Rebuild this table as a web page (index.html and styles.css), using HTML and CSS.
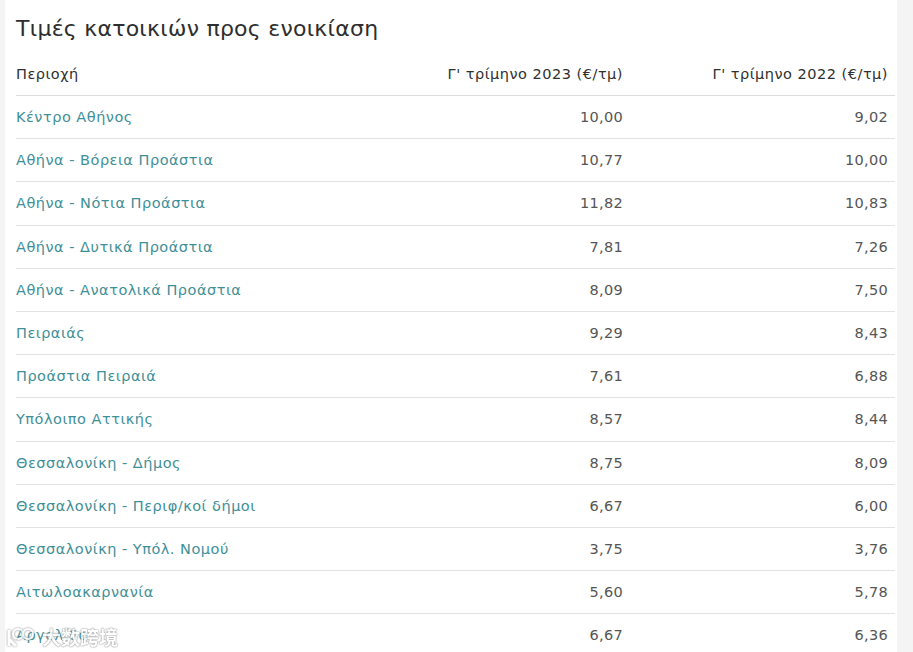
FILE: index.html
```html
<!DOCTYPE html>
<html lang="el">
<head>
<meta charset="utf-8">
<link rel="stylesheet" href="styles.css">
</head>
<body>
<div class="page">
  <div class="card">
    <h1 class="title">Τιμές κατοικιών προς ενοικίαση</h1>
    <table class="rent">
      <thead>
        <tr><th class="c-area">Περιοχή</th><th class="c-num">Γ' τρίμηνο 2023 (€/τμ)</th><th class="c-num">Γ' τρίμηνο 2022 (€/τμ)</th></tr>
      </thead>
      <tbody>
        <tr><td class="c-area">Κέντρο Αθήνος</td><td class="c-num">10,00</td><td class="c-num">9,02</td></tr>
        <tr><td class="c-area">Αθήνα - Βόρεια Προάστια</td><td class="c-num">10,77</td><td class="c-num">10,00</td></tr>
        <tr><td class="c-area">Αθήνα - Νότια Προάστια</td><td class="c-num">11,82</td><td class="c-num">10,83</td></tr>
        <tr><td class="c-area">Αθήνα - Δυτικά Προάστια</td><td class="c-num">7,81</td><td class="c-num">7,26</td></tr>
        <tr><td class="c-area">Αθήνα - Ανατολικά Προάστια</td><td class="c-num">8,09</td><td class="c-num">7,50</td></tr>
        <tr><td class="c-area">Πειραιάς</td><td class="c-num">9,29</td><td class="c-num">8,43</td></tr>
        <tr><td class="c-area">Προάστια Πειραιά</td><td class="c-num">7,61</td><td class="c-num">6,88</td></tr>
        <tr><td class="c-area">Υπόλοιπο Αττικής</td><td class="c-num">8,57</td><td class="c-num">8,44</td></tr>
        <tr><td class="c-area">Θεσσαλονίκη - Δήμος</td><td class="c-num">8,75</td><td class="c-num">8,09</td></tr>
        <tr><td class="c-area">Θεσσαλονίκη - Περιφ/κοί δήμοι</td><td class="c-num">6,67</td><td class="c-num">6,00</td></tr>
        <tr><td class="c-area">Θεσσαλονίκη - Υπόλ. Νομού</td><td class="c-num">3,75</td><td class="c-num">3,76</td></tr>
        <tr><td class="c-area">Αιτωλοακαρνανία</td><td class="c-num">5,60</td><td class="c-num">5,78</td></tr>
        <tr><td class="c-area">Αργολίδα</td><td class="c-num">6,67</td><td class="c-num">6,36</td></tr>
      </tbody>
    </table>
  </div>
  <div class="watermark">
    <svg class="wm-logo" width="34" height="22" viewBox="0 0 34 22"><circle cx="12" cy="8" r="5" fill="none" stroke="#fff" stroke-width="2"/><circle cx="22" cy="8" r="5" fill="none" stroke="#fff" stroke-width="2"/><path d="M3 4 V20 M3 13 L10 20" fill="none" stroke="#fff" stroke-width="3"/></svg>
    <span class="wm-text">大数跨境</span>
  </div>
</div>
</body>
</html>
```
FILE: styles.css
```css
html, body { margin: 0; padding: 0; }
body {
  background: #f4f4f4;
  font-family: "DejaVu Sans", "Noto Sans", "Noto Sans CJK SC", sans-serif;
  width: 913px;
  height: 652px;
  overflow: hidden;
}
.page {
  position: relative;
  padding: 0 16px 0 5px;
  height: 652px;
}
.card {
  background: #fff;
  height: 100%;
  padding: 14px 2px 0 11px;
}
.title {
  margin: 0 0 9px 0;
  font-size: 22px;
  font-weight: 400;
  color: #2e2e2e;
  line-height: 30px;
  letter-spacing: 0.25px;
}
.rent {
  width: 879px;
  border-collapse: collapse;
  font-size: 14.5px;
  letter-spacing: 0.5px;
}
.rent th {
  font-weight: 400;
  color: #2f2f2f;
  height: 42px;
  padding: 0 7px 0 0;
  vertical-align: middle;
  border-bottom: 1px solid #dcdcdc;
}
.rent td {
  height: 42.2px;
  padding: 0 7px 0 0;
  border-bottom: 1px solid #e2e2e2;
}
.rent td.c-num { letter-spacing: 0.3px; }
.rent tbody tr:last-child td { border-bottom: none; }
.c-area { text-align: left; }
.rent td.c-area { color: #3f8f98; }
.c-num { text-align: right; }
.rent td.c-num { color: #555; }
.rent th.c-area { width: 420px; }
.rent th:nth-child(2) { width: 180px; }
.watermark {
  position: absolute;
  left: 6px;
  top: 623px;
  display: flex;
  align-items: center;
  gap: 2px;
  opacity: 0.85;
}
.wm-text {
  font-family: "Noto Sans CJK SC", sans-serif;
  font-size: 19px;
  font-weight: 700;
  color: #fff;
  text-shadow: 0 0 2px #888, 0 0 1px #666;
}
.wm-logo { filter: drop-shadow(0 0 1px #777); }
```
